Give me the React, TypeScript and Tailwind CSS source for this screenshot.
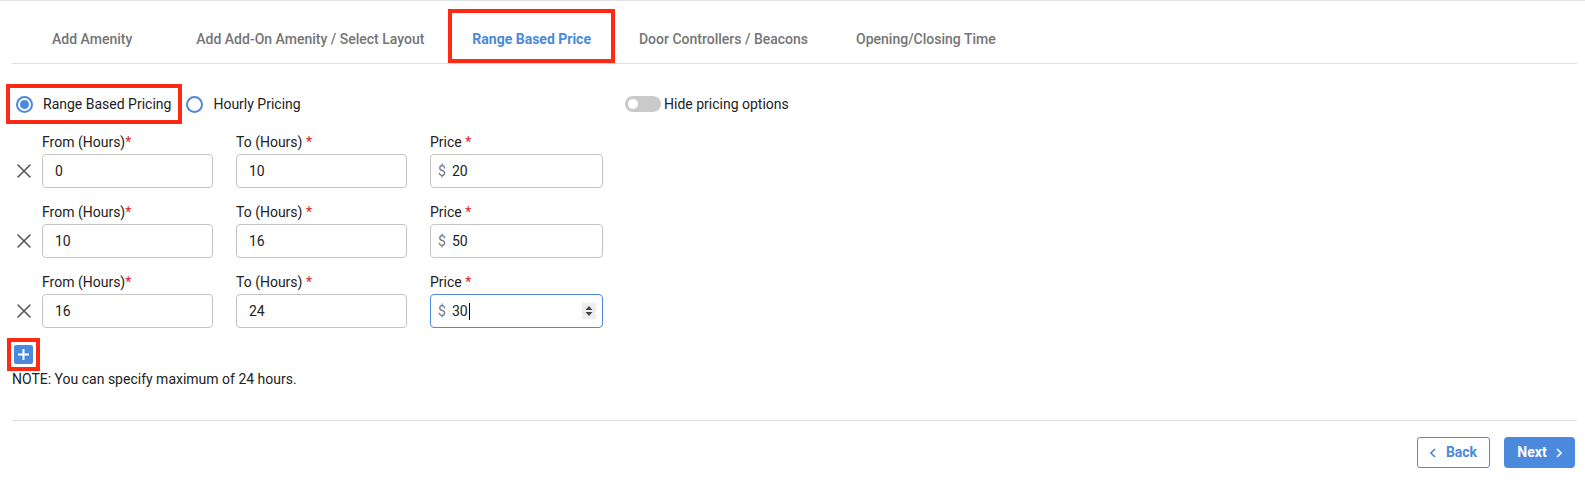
import React from 'react';

const font = { fontFamily: 'Roboto, "Liberation Sans", sans-serif' };

const tabs = [
  { label: 'Add Amenity', cls: 'ml-4 mr-4 px-6' },
  { label: 'Add Add-On Amenity / Select Layout', cls: 'px-6' },
  { label: 'Range Based Price', cls: 'px-[20px]', active: true },
  { label: 'Door Controllers / Beacons', cls: 'px-6' },
  { label: 'Opening/Closing Time', cls: 'px-6' },
];

const rows = [
  { from: '0', to: '10', price: '20' },
  { from: '10', to: '16', price: '50' },
  { from: '16', to: '24', price: '30', focused: true },
];

function Label({ text, space }: { text: string; space?: boolean }) {
  return (
    <div className="h-5 text-[14px] leading-5 text-[#222]">
      {text}
      {space ? ' ' : ''}
      <span className="text-[#e02424]">*</span>
    </div>
  );
}

function XIcon() {
  return (
    <svg width="16" height="16" viewBox="0 0 16 16" fill="none" stroke="#555" strokeWidth="1.6" strokeLinecap="round">
      <path d="M2 2 L14 14 M14 2 L2 14" />
    </svg>
  );
}

export default function App() {
  return (
    <div className="w-[1585px] h-[485px] bg-white border-t border-[#dfe2e6]" style={font}>
      <div className="pl-3 pr-2">
        {/* TABS */}
        <div className="flex items-end h-[63px] border-b border-[#e0e0e0] pt-[8px]">
          {tabs.map((t) => (
            <div
              key={t.label}
              className={`h-[54px] pt-[6px] flex items-center whitespace-nowrap text-[14px] ${t.cls} ${
                t.active ? 'border-4 border-[#ff2a14] text-[#4a89dc] font-bold' : 'font-medium text-[#757575]'
              }`}
            >
              {t.label}
            </div>
          ))}
        </div>

        {/* PRICING TYPE */}
        <div className="flex items-center mt-[20px] h-10">
          <div className="flex items-center w-[619px] -ml-[6px]">
            <label className="flex items-center h-10 border-4 border-[#ff2a14] pl-[6px] pr-[7px]">
              <span className="size-[17px] rounded-full border-2 border-[#4a89dc] flex items-center justify-center">
                <span className="size-[9px] rounded-full bg-[#4a89dc]" />
              </span>
              <span className="ml-[10px] text-[14px] text-[#222]">Range Based Pricing</span>
            </label>
            <label className="flex items-center ml-[4px]">
              <span className="size-[17px] rounded-full border-2 border-[#4a89dc]" />
              <span className="ml-[10px] text-[14px] text-[#222]">Hourly Pricing</span>
            </label>
          </div>
          <div className="flex items-center">
            <span className="w-[36px] h-[16px] rounded-full bg-[#cacaca] flex items-center px-[3px]">
              <span className="size-[10px] rounded-full bg-white" />
            </span>
            <span className="ml-[3px] text-[14px] text-[#222]">Hide pricing options</span>
          </div>
        </div>

        {/* RANGE ROWS */}
        <div className="mt-[8px] flex flex-col gap-[14px]">
          {rows.map((r, i) => (
            <div key={i} className="flex">
              <div className="w-[30px] flex flex-col">
                <div className="h-[22px]" />
                <div className="h-[34px] w-[24px] flex items-center justify-center">
                  <XIcon />
                </div>
              </div>
              <div className="grid grid-cols-[171px_171px_173px] gap-x-[23px]">
                <div>
                  <Label text="From (Hours)" />
                  <div className="mt-[2px] h-[34px] border border-[#c4c4c4] rounded-[4px] pl-[12px] flex items-center text-[14px] text-[#222]">
                    {r.from}
                  </div>
                </div>
                <div>
                  <Label text="To (Hours)" space />
                  <div className="mt-[2px] h-[34px] border border-[#c4c4c4] rounded-[4px] pl-[12px] flex items-center text-[14px] text-[#222]">
                    {r.to}
                  </div>
                </div>
                <div>
                  <Label text="Price" space />
                  <div
                    className={`mt-[2px] h-[34px] border rounded-[4px] pl-[7px] pr-[6px] flex items-center text-[14px] text-[#222] ${
                      r.focused ? 'border-[#4a89dc]' : 'border-[#c4c4c4]'
                    }`}
                  >
                    <span className="text-[#777]">$</span>
                    <span className="ml-[6px]">{r.price}</span>
                    {r.focused && <span className="w-px h-[17px] bg-black ml-[1px]" />}
                    {r.focused && (
                      <span className="ml-auto w-[14px] h-[16px] bg-[#eeeeee] flex items-center justify-center">
                        <svg width="8" height="12" viewBox="0 0 8 12" fill="#444">
                          <path d="M4 1 L7.5 5 L0.5 5 Z M4 11 L7.5 7 L0.5 7 Z" />
                        </svg>
                      </span>
                    )}
                  </div>
                </div>
              </div>
            </div>
          ))}
        </div>

        {/* ADD ROW */}
        <div className="mt-[10px] -ml-[5px] w-[33px] h-[33px] border-4 border-[#ff2a14] flex items-center justify-center">
          <span className="size-[19px] rounded-[2px] bg-[#4a89dc] flex items-center justify-center">
            <svg width="11" height="11" viewBox="0 0 11 11" stroke="white" strokeWidth="2">
              <path d="M5.5 0 V11 M0 5.5 H11" />
            </svg>
          </span>
        </div>
        <p className="text-[14px] leading-4 text-[#222]">NOTE: You can specify maximum of 24 hours.</p>

        {/* FOOTER */}
        <div className="mt-[33px] border-t border-[#e0e0e0] pt-[16px] flex justify-end gap-[14px] pr-[2px]">
          <button className="h-[31px] w-[73px] border border-[#4a89dc] rounded-[3px] flex items-center justify-center gap-[10px] text-[14px] font-bold text-[#4a89dc]">
            <svg width="6" height="10" viewBox="0 0 6 10" fill="none" stroke="#4a89dc" strokeWidth="1.6">
              <path d="M5 1 L1 5 L5 9" />
            </svg>
            Back
          </button>
          <button className="h-[31px] w-[71px] bg-[#4a89dc] rounded-[4px] flex items-center justify-center gap-[9px] text-[14px] font-bold text-white">
            Next
            <svg width="6" height="10" viewBox="0 0 6 10" fill="none" stroke="white" strokeWidth="1.6">
              <path d="M1 1 L5 5 L1 9" />
            </svg>
          </button>
        </div>
      </div>
    </div>
  );
}
